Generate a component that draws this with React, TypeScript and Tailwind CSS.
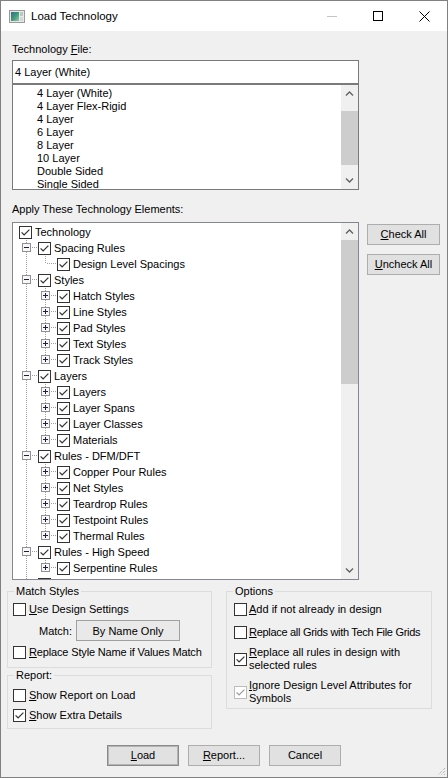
import React from 'react'

type Kind = 'pass' | 'tee' | 'end'

type Row = { level: 0 | 1 | 2; text: string; exp?: '+' | '-'; last?: boolean }

const rows: Row[] = [
  { level: 0, text: 'Technology' },
  { level: 1, text: 'Spacing Rules', exp: '-' },
  { level: 2, text: 'Design Level Spacings', last: true },
  { level: 1, text: 'Styles', exp: '-' },
  { level: 2, text: 'Hatch Styles', exp: '+' },
  { level: 2, text: 'Line Styles', exp: '+' },
  { level: 2, text: 'Pad Styles', exp: '+' },
  { level: 2, text: 'Text Styles', exp: '+' },
  { level: 2, text: 'Track Styles', exp: '+', last: true },
  { level: 1, text: 'Layers', exp: '-' },
  { level: 2, text: 'Layers', exp: '+' },
  { level: 2, text: 'Layer Spans', exp: '+' },
  { level: 2, text: 'Layer Classes', exp: '+' },
  { level: 2, text: 'Materials', exp: '+', last: true },
  { level: 1, text: 'Rules - DFM/DFT', exp: '-' },
  { level: 2, text: 'Copper Pour Rules', exp: '+' },
  { level: 2, text: 'Net Styles', exp: '+' },
  { level: 2, text: 'Teardrop Rules', exp: '+' },
  { level: 2, text: 'Testpoint Rules', exp: '+' },
  { level: 2, text: 'Thermal Rules', exp: '+', last: true },
  { level: 1, text: 'Rules - High Speed', exp: '-' },
  { level: 2, text: 'Serpentine Rules', exp: '+', last: true },
  // next item, only the top edge of its checkbox shows
  { level: 1, text: '', exp: '+' },
]

const files = ['4 Layer (White)', '4 Layer Flex-Rigid', '4 Layer', '6 Layer', '8 Layer', '10 Layer', 'Double Sided', 'Single Sided']

function Check({ checked = false, disabled = false }: { checked?: boolean; disabled?: boolean }) {
  const box = disabled ? '#bcbcbc' : '#333333'
  const mark = disabled ? '#9a9a9a' : '#333333'
  return (
    <svg width="13" height="13" viewBox="0 0 13 13" className="block shrink-0">
      <rect x="0.5" y="0.5" width="12" height="12" fill="#ffffff" stroke={box} shapeRendering="crispEdges" />
      {checked && <path d="M2.6 6.4 L5.1 8.9 L10.4 3.6" fill="none" stroke={mark} strokeWidth="1.25" />}
    </svg>
  )
}

function Cell({ kind, exp }: { kind: Kind; exp?: '+' | '-' }) {
  const dot = '#a0a0a0'
  return (
    <svg width="19" height="16" viewBox="0 0 19 16" shapeRendering="crispEdges" className="block shrink-0">
      <line x1="7.5" y1="0" x2="7.5" y2={kind === 'end' ? 8 : 16} stroke={dot} strokeDasharray="1 1" />
      {kind !== 'pass' && <line x1="9" y1="7.5" x2="19" y2="7.5" stroke={dot} strokeDasharray="1 1" />}
      {exp && (
        <>
          <rect x="3.5" y="3.5" width="8" height="8" fill="#f7f7f7" stroke="#919191" />
          <line x1="5" y1="7.5" x2="10" y2="7.5" stroke="#1e1e3c" />
          {exp === '+' && <line x1="7.5" y1="5" x2="7.5" y2="10" stroke="#1e1e3c" />}
        </>
      )}
    </svg>
  )
}

function Chevron({ up }: { up?: boolean }) {
  return (
    <svg width="9" height="5" viewBox="0 0 9 5" className="block">
      <path d={up ? 'M1 4.5 L4.5 1 L8 4.5' : 'M1 0.5 L4.5 4 L8 0.5'} fill="none" stroke="#606060" strokeWidth="1.3" />
    </svg>
  )
}

function ScrollBar({ thumb }: { thumb: string }) {
  return (
    <div className="w-[17px] h-full shrink-0 flex flex-col bg-[#f0f0f0]">
      <div className="h-[17px] flex items-center justify-center"><Chevron up /></div>
      <div className="flex-1 flex flex-col">
        <div className={'w-full bg-[#cdcdcd] ' + thumb} />
      </div>
      <div className="h-[17px] flex items-center justify-center"><Chevron /></div>
    </div>
  )
}

function TreeRow({ row }: { row: Row }) {
  const cells: { kind: Kind; exp?: '+' | '-' }[] = []
  if (row.level === 1) cells.push({ kind: 'tee', exp: row.exp })
  if (row.level === 2) {
    cells.push({ kind: 'pass' })
    cells.push({ kind: row.last ? 'end' : 'tee', exp: row.exp })
  }
  return (
    <div className="h-[16px] flex items-start pl-[6px] shrink-0">
      {cells.map((c, i) => (
        <Cell key={i} kind={c.kind} exp={c.exp} />
      ))}
      <div className="mt-[2px]"><Check checked /></div>
      {row.text && <span className="ml-[3px] leading-[16px] whitespace-nowrap">{row.text}</span>}
    </div>
  )
}

function Btn({ children, w, main }: { children: React.ReactNode; w: string; main?: boolean }) {
  return (
    <button
      type="button"
      className={
        'h-[21px] shrink-0 bg-[#e1e1e1] flex items-center justify-center leading-[13px] ' +
        w +
        (main ? ' border border-[#8a8a8a] shadow-[inset_0_0_0_1px_#b4b4b4]' : ' border border-[#adadad]')
      }
    >
      {children}
    </button>
  )
}

function Group({ label, children, cls }: { label: string; children: React.ReactNode; cls: string }) {
  return (
    <div className={'relative border border-[#dcdcdc] flex flex-col ' + cls}>
      <span className="absolute -top-[8px] left-[6px] px-[2px] bg-[#f0f0f0] leading-[14px]">{label}</span>
      {children}
    </div>
  )
}

function Opt({ children, checked, disabled, cls }: { children: React.ReactNode; checked?: boolean; disabled?: boolean; cls: string }) {
  return (
    <div className={'flex items-center ' + cls}>
      <Check checked={checked} disabled={disabled} />
      <span className="ml-[3px] leading-[14px] whitespace-nowrap">{children}</span>
    </div>
  )
}

export default function App() {
  return (
    <div className="relative w-[448px] h-[778px] border border-[#808080] bg-[#f0f0f0] flex flex-col overflow-hidden text-[11px] text-black font-['Liberation_Sans',Arial,sans-serif]">
      {/* title bar */}
      <div className="h-[30px] bg-white flex items-center shrink-0">
        <svg width="16" height="13" viewBox="0 0 16 13" className="ml-[8px] block">
          <defs>
            <linearGradient id="ic" x1="0" y1="0" x2="1" y2="1">
              <stop offset="0" stopColor="#2f6f8a" />
              <stop offset="0.5" stopColor="#3f9a78" />
              <stop offset="1" stopColor="#9cc7a8" />
            </linearGradient>
          </defs>
          <rect x="0.5" y="0.5" width="15" height="12" fill="#e8e8e8" stroke="#9a9a9a" />
          <rect x="2" y="2" width="8" height="9" fill="url(#ic)" />
          <rect x="11" y="2" width="3" height="4" fill="#b9c9c0" />
          <rect x="11" y="7" width="3" height="4" fill="#d0d8d2" />
        </svg>
        <span className="ml-[6px] text-[11.5px] leading-[14px]">Load Technology</span>
        <div className="ml-auto flex h-full">
          <div className="w-[46px] h-full flex items-center justify-center">
            <div className="w-[10px] h-[1px] bg-[#c4c4c4]" />
          </div>
          <div className="w-[46px] h-full flex items-center justify-center">
            <div className="w-[10px] h-[10px] border border-black" />
          </div>
          <div className="w-[46px] h-full flex items-center justify-center">
            <svg width="11" height="11" viewBox="0 0 11 11" className="block">
              <path d="M0.5 0.5 L10.5 10.5 M10.5 0.5 L0.5 10.5" stroke="#000" strokeWidth="1" />
            </svg>
          </div>
        </div>
      </div>

      <div className="flex flex-col px-[11px]">
        <div className="mt-[11px] leading-[14px]">
          Technology <u>F</u>ile:
        </div>
        <div className="mt-[4px] h-[24px] w-[347px] border border-[#7a7a7a] bg-white flex items-center pl-[2px]">
          4 Layer (White)
        </div>
        <div className="h-[106px] w-[347px] border border-[#7a7a7a] bg-white flex">
          <div className="flex-1 pl-[24px] pt-[2px] overflow-hidden">
            {files.map((f) => (
              <div key={f} className="leading-[13px] whitespace-nowrap">{f}</div>
            ))}
          </div>
          <ScrollBar thumb="mt-[9px] h-[54px]" />
        </div>

        <div className="mt-[12px] leading-[14px]">Apply These Technology Elements:</div>
        <div className="mt-[6px] flex items-start">
          <div className="w-[347px] h-[358px] shrink-0 border border-[#828790] bg-white flex">
            <div className="flex-1 pt-[1px] overflow-hidden flex flex-col">
              {rows.map((r, i) => (
                <TreeRow key={i} row={r} />
              ))}
            </div>
            <ScrollBar thumb="mt-0 h-[144px]" />
          </div>
          <div className="ml-[8px] shrink-0 flex flex-col">
            <div className="mt-[2px]">
              <Btn w="w-[73px]"><span><u>C</u>heck All</span></Btn>
            </div>
            <div className="mt-[9px]">
              <Btn w="w-[73px]"><span><u>U</u>ncheck All</span></Btn>
            </div>
          </div>
        </div>
      </div>

      {/* option groups */}
      <div className="flex px-[6px]">
        <div className="w-[205px] shrink-0 flex flex-col">
          <Group label="Match Styles" cls="mt-[11px] h-[77px] pl-[5px]">
            <Opt cls="mt-[10px]"><u>U</u>se Design Settings</Opt>
            <div className="mt-[4px] flex items-center pl-[26px]">
              <span className="w-[37px] leading-[14px]">Match:</span>
              <div className="w-[104px] h-[21px] border border-[#a0a0a0] bg-[#e9e9e9] flex items-center justify-center leading-[14px]">
                By Name Only
              </div>
            </div>
            <Opt cls="mt-[4px]"><span className="tracking-[-0.15px]"><u>R</u>eplace Style Name if Values Match</span></Opt>
          </Group>
          <Group label="Report:" cls="mt-[7px] h-[54px] pl-[5px]">
            <Opt cls="mt-[12px]"><u>S</u>how Report on Load</Opt>
            <Opt cls="mt-[6px]" checked><u>S</u>how Extra Details</Opt>
          </Group>
        </div>
        <Group label="Options" cls="ml-[14px] mt-[11px] w-[206px] h-[118px] shrink-0 pl-[7px]">
          <div className="mt-[10px] flex items-center">
            <Check />
            <span className="ml-[2px] leading-[14px] whitespace-nowrap"><u>A</u>dd if not already in design</span>
          </div>
          <div className="mt-[9px] flex items-center">
            <Check />
            <span className="ml-[2px] leading-[14px] whitespace-nowrap tracking-[-0.3px]"><u>R</u>eplace all Grids with Tech File Grids</span>
          </div>
          <div className="mt-[7px] flex items-center">
            <Check checked />
            <span className="ml-[2px] leading-[13px] whitespace-nowrap"><u>R</u>eplace all rules in design with<br />selected rules</span>
          </div>
          <div className="mt-[7px] flex items-center">
            <Check checked disabled />
            <span className="ml-[2px] leading-[13px] whitespace-nowrap"><u>I</u>gnore Design Level Attributes for<br />Symbols</span>
          </div>
        </Group>
      </div>

      <div className="mt-[16px] flex justify-center gap-[9px]">
        <Btn w="w-[72px]" main><span><u>L</u>oad</span></Btn>
        <Btn w="w-[72px]"><span><u>R</u>eport...</span></Btn>
        <Btn w="w-[72px]">Cancel</Btn>
      </div>

      <svg width="11" height="11" viewBox="0 0 11 11" className="absolute right-[1px] bottom-[1px] block">
        <path d="M10 3 L3 10 M10 6 L6 10 M10 9 L9 10" stroke="#a0a0a0" strokeWidth="1" strokeDasharray="1 1" />
      </svg>
    </div>
  )
}
